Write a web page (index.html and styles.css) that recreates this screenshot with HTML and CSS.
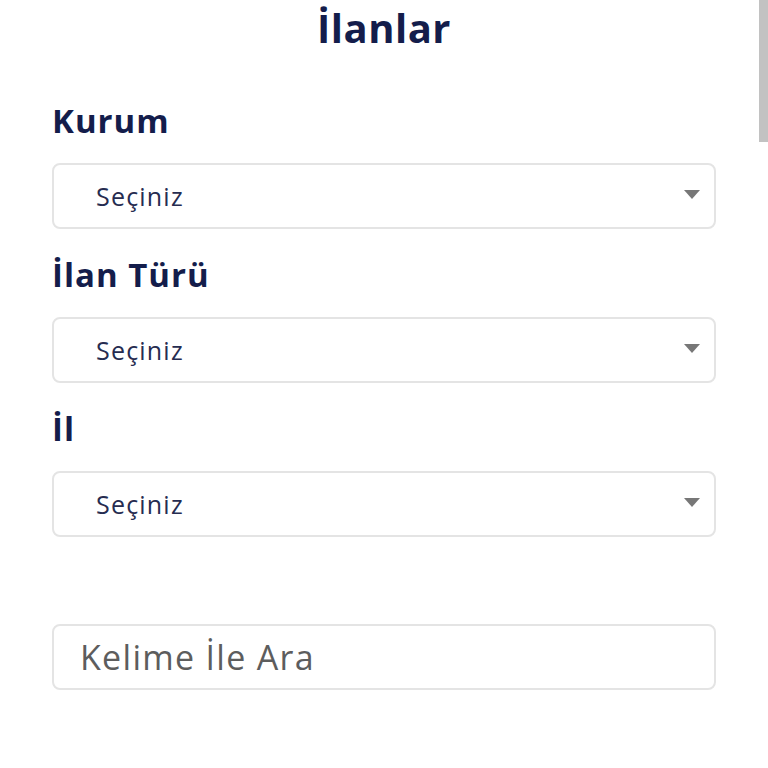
FILE: index.html
```html
<!DOCTYPE html>
<html lang="tr">
<head>
<meta charset="utf-8">
<title>İlanlar</title>
<link rel="stylesheet" href="styles.css">
</head>
<body>
<main class="page">
  <h1 class="title">İlanlar</h1>
  <form class="filters">
    <div class="field">
      <label class="label">Kurum</label>
      <div class="select"><span class="select-text">Seçiniz</span><span class="caret"></span></div>
    </div>
    <div class="field">
      <label class="label">İlan Türü</label>
      <div class="select"><span class="select-text">Seçiniz</span><span class="caret"></span></div>
    </div>
    <div class="field">
      <label class="label">İl</label>
      <div class="select"><span class="select-text">Seçiniz</span><span class="caret"></span></div>
    </div>
    <div class="search">
      <input class="search-input" type="text" placeholder="Kelime İle Ara">
    </div>
  </form>
</main>
<div class="scrollbar"></div>
</body>
</html>
```
FILE: styles.css
```css
html, body {
  margin: 0;
  padding: 0;
  background: #ffffff;
  overflow: hidden;
}
body {
  font-family: "Open Sans", "Noto Sans", "Liberation Sans", sans-serif;
  color: #141d4b;
}
.page {
  padding: 0 52px;
}
.title {
  margin: 0;
  padding-top: 2px;
  text-align: center;
  font-size: 40px;
  line-height: 52px;
  font-weight: 700;
  letter-spacing: 0.5px;
  color: #141d4b;
}
.filters {
  display: flex;
  flex-direction: column;
  margin-top: 45px;
}
.field {
  display: flex;
  flex-direction: column;
  gap: 20px;
  margin-bottom: 24px;
}
.label {
  font-size: 33px;
  line-height: 44px;
  font-weight: 700;
  letter-spacing: 1px;
  color: #141d4b;
}
.select {
  box-sizing: border-box;
  height: 66px;
  border: 2px solid #e4e4e4;
  border-radius: 8px;
  display: flex;
  align-items: center;
  justify-content: space-between;
  padding: 0 14px 0 42px;
}
.select-text {
  font-size: 25px;
  color: #262c50;
  letter-spacing: 1.2px;
}
.caret {
  width: 0;
  height: 0;
  border-left: 8px solid transparent;
  border-right: 8px solid transparent;
  border-top: 9px solid #777777;
  margin-top: -4px;
}
.search {
  margin-top: 63px;
}
.search-input {
  box-sizing: border-box;
  width: 100%;
  height: 66px;
  border: 2px solid #e4e4e4;
  border-radius: 8px;
  padding: 0 26px;
  font-family: inherit;
  font-size: 34px;
  letter-spacing: 1.3px;
  color: #555;
  outline: none;
}
.search-input::placeholder {
  color: #5d5d5d;
}
.scrollbar {
  position: fixed;
  top: 0;
  right: 0;
  width: 9px;
  height: 142px;
  background: #c2c2c2;
}
```
